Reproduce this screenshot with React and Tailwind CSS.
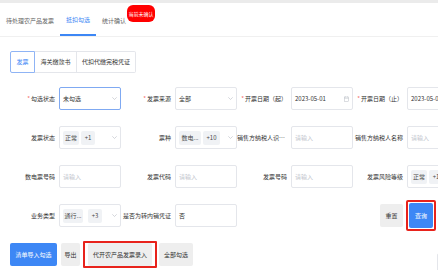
import React from 'react';

const font = { fontFamily: '"Noto Sans CJK SC", "Noto Sans", sans-serif' };

function Chevron() {
  return (
    <svg width="5" height="3" viewBox="0 0 5 3" className="ml-auto shrink-0">
      <path d="M0.3 0.3 L2.5 2.5 L4.7 0.3" fill="none" stroke="#b8bcc4" strokeWidth="0.6" />
    </svg>
  );
}

function CalendarIcon() {
  return (
    <svg width="5" height="6" viewBox="0 0 5 6" className="ml-auto shrink-0">
      <rect x="0.4" y="1" width="4.2" height="4.6" fill="none" stroke="#b8bcc4" strokeWidth="0.5" />
      <path d="M0.4 2.3 H4.6 M1.4 0.3 V1.4 M3.6 0.3 V1.4" stroke="#b8bcc4" strokeWidth="0.5" />
    </svg>
  );
}

function Tag({ children, w }) {
  return (
    <span className={`flex h-[14px] items-center justify-center rounded-[2px] bg-[#f0f2f5] text-[#4a4a4a] ${w}`}>
      {children}
    </span>
  );
}

function Field({ label, required, children, active }) {
  return (
    <div className="flex w-[116px] shrink-0 items-center">
      <div className="w-[54px] shrink-0 truncate pr-[4px] text-right leading-[12px] text-[#333]">
        {required && <span className="mr-[1px] text-[#f56c6c]">*</span>}
        {label}
      </div>
      <div
        className={`flex h-[23px] w-[62px] shrink-0 items-center gap-[2px] rounded-[2px] border bg-white px-[3px] ${
          active ? 'border-[#7fa9f2]' : 'border-[#e4e6eb]'
        }`}
      >
        {children}
      </div>
    </div>
  );
}

const Placeholder = () => <span className="text-[#c0c4cc]">请输入</span>;

export default function App() {
  return (
    <div className="h-[270px] w-[438px] overflow-hidden bg-white text-[6px] leading-[10px]" style={font}>
      <div className="h-[3px] bg-[#ebebeb]" />

      <div className="flex h-[34px] border-b border-[#f0f0f0]">
        <div className="flex items-center px-[6px] pt-[2px] text-[#666]">待处理农产品发票</div>
        <div className="flex items-center border-b-2 border-[#3d87f5] px-[6px] pt-[2px] text-[#3d87f5]">抵扣勾选</div>
        <div className="relative flex items-center px-[6px] pt-[2px] text-[#666]">
          统计确认
          <span className="absolute left-[31px] top-[2px] flex h-[17px] w-[28px] items-center justify-center rounded-[6px] bg-[#ff0000] text-[5px] text-white">
            当前未确认
          </span>
        </div>
      </div>

      <div className="ml-[10px] mt-[14px] flex h-[22px] w-[126px]">
        <div className="flex w-[25px] items-center justify-center rounded-l-[2px] border border-[#8fb4f5] text-[#3d87f5]">发票</div>
        <div className="flex w-[42px] items-center justify-center border-y border-r border-[#e4e6eb] text-[#333]">海关缴款书</div>
        <div className="flex w-[59px] items-center justify-center rounded-r-[2px] border-y border-r border-[#e4e6eb] text-[#333]">代扣代缴完税凭证</div>
      </div>

      <div className="ml-[5px] mt-[14px] flex flex-col gap-[16px]">
        <div className="flex">
          <Field label="勾选状态" required active>
            <span className="text-[#333]">未勾选</span>
            <Chevron />
          </Field>
          <Field label="发票来源" required>
            <span className="text-[#333]">全部</span>
            <Chevron />
          </Field>
          <Field label="开票日期（起）" required>
            <span className="text-[#333]">2023-05-01</span>
            <CalendarIcon />
          </Field>
          <Field label="开票日期（止）" required>
            <span className="text-[#333]">2023-05-01</span>
            <CalendarIcon />
          </Field>
        </div>

        <div className="flex">
          <Field label="发票状态">
            <Tag w="w-[16px]">正常</Tag>
            <Tag w="w-[14px]">+1</Tag>
            <Chevron />
          </Field>
          <Field label="票种">
            <Tag w="w-[22px]">数电...</Tag>
            <Tag w="w-[17px]">+10</Tag>
            <Chevron />
          </Field>
          <Field label="销售方纳税人识别号">
            <Placeholder />
          </Field>
          <Field label="销售方纳税人名称">
            <Placeholder />
          </Field>
        </div>

        <div className="flex">
          <Field label="数电票号码">
            <Placeholder />
          </Field>
          <Field label="发票代码">
            <Placeholder />
          </Field>
          <Field label="发票号码">
            <Placeholder />
          </Field>
          <Field label="发票风险等级">
            <Tag w="w-[16px]">正常</Tag>
            <Tag w="w-[14px]">+1</Tag>
            <Chevron />
          </Field>
        </div>

        <div className="flex h-[23px] items-center">
          <Field label="业务类型">
            <Tag w="w-[20px]">通行...</Tag>
            <span className="ml-[3px]">
              <Tag w="w-[14px]">+3</Tag>
            </span>
            <Chevron />
          </Field>
          <Field label="是否为转内销凭证">
            <span className="text-[#333]">否</span>
          </Field>
          <div className="ml-auto mr-[2px] flex items-center gap-[3px]">
            <button className="flex h-[23px] w-[23px] items-center justify-center rounded-[2px] bg-[#eeeeee] text-[#333]">重置</button>
            <div className="-my-[4px] rounded-[2px] border-2 border-[#e8231c] p-[1px]">
              <button className="flex h-[25px] w-[24px] items-center justify-center rounded-[2px] bg-[#3d87f5] text-white">查询</button>
            </div>
          </div>
        </div>
      </div>

      <div className="mt-[16px] flex h-[23px] w-[470px] items-center pl-[10px]">
        <button className="flex h-[23px] w-[47px] items-center justify-center rounded-[2px] bg-[#3d87f5] text-white">清单导入勾选</button>
        <button className="ml-[4px] flex h-[23px] w-[19px] items-center justify-center rounded-[2px] bg-[#eeeeee] text-[#333]">导出</button>
        <div className="-my-[2px] ml-[3px] flex h-[27px] items-center rounded-[1px] border-2 border-[#e8231c] px-[3px]">
          <button className="flex h-[23px] w-[64px] items-center justify-center rounded-[2px] bg-[#eeeeee] text-[#333]">代开农产品发票录入</button>
        </div>
        <button className="ml-[2px] flex h-[23px] w-[34px] items-center justify-center rounded-[2px] bg-[#eeeeee] text-[#333]">全部勾选</button>
        <div className="ml-auto mt-[20px] h-[24px] w-[33px] rounded-[2px] border border-[#e4e6eb]" />
      </div>
    </div>
  );
}
